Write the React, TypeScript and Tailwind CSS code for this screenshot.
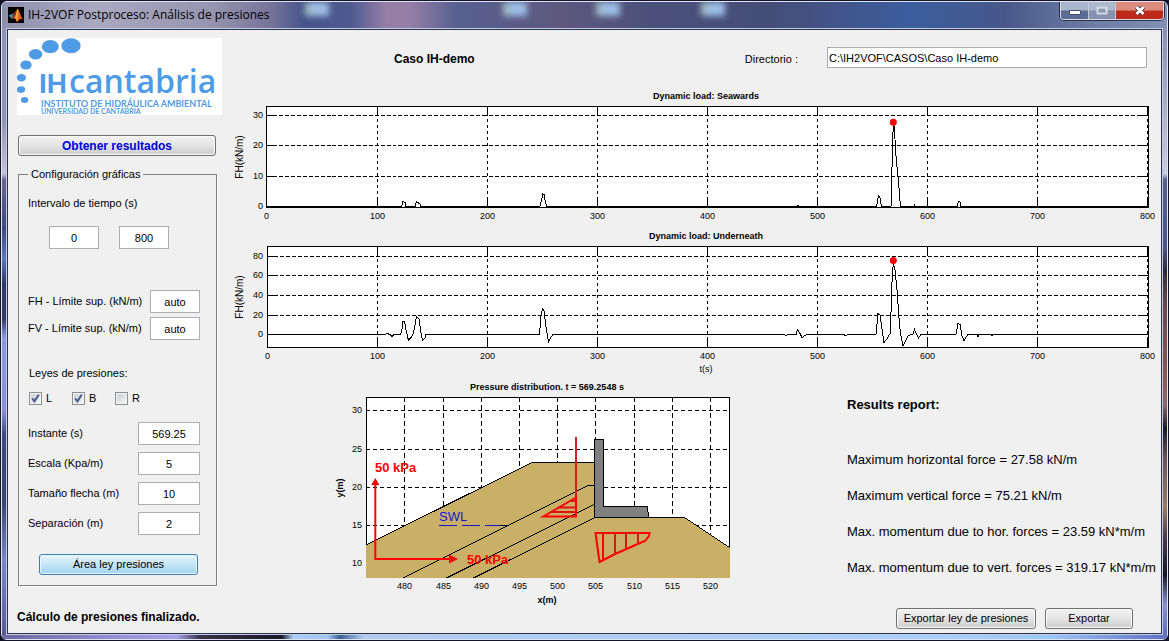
import React, { useId, useState } from 'react';

const BUTTON_BASE =
  'h-[21px] rounded-[3px] border border-[#707070] bg-linear-to-b from-[#f3f3f3] from-0% via-[#e4e4e4] via-50% to-[#cdcdcd] shadow-[inset_0_0_0_1px_#fafafa] flex items-center justify-center whitespace-nowrap';

const INPUT_BASE = 'h-[23px] border border-[#abadb3] bg-white text-center text-[11px] text-black outline-none';

interface FieldProps {
  label: string;
  value: string;
  inputClass: string;
}

const Field: React.FC<FieldProps> = ({ label, value, inputClass }) => {
  const id = useId();
  return (
    <div className="flex items-start justify-between">
      <label htmlFor={id} className="pt-1 leading-[14px]">
        {label}
      </label>
      <input id={id} type="text" defaultValue={value} className={`${INPUT_BASE} ${inputClass}`} />
    </div>
  );
};

interface CheckProps {
  label: string;
  initial: boolean;
}

const Check: React.FC<CheckProps> = ({ label, initial }) => {
  const [checked, setChecked] = useState(initial);
  return (
    <label className="relative flex w-[43px] items-center gap-1">
      <input
        type="checkbox"
        checked={checked}
        onChange={(e) => setChecked(e.target.checked)}
        className="h-[13px] w-[13px] appearance-none border border-[#8e8f8f] bg-linear-to-br from-[#c8ccd2] to-[#f8f8f8] shadow-[inset_0_0_0_1px_#f4f4f4]"
      />
      {checked && (
        <svg className="pointer-events-none absolute left-0 h-[13px] w-[13px]" viewBox="0 0 13 13">
          <path d="M3.2 6.2L5.4 9.4L9.8 2.6" fill="none" stroke="#4b5f97" strokeWidth="2" />
        </svg>
      )}
      {label}
    </label>
  );
};

const Logo = () => (
  <svg viewBox="0 0 205 77" className="block w-[205px] bg-white" role="img" aria-label="IH cantabria">
    <g fill="#4f9be6">
      <ellipse cx="54" cy="7.7" rx="9.7" ry="7.5" />
      <ellipse cx="33.3" cy="8.7" rx="8.5" ry="6.6" />
      <ellipse cx="18.6" cy="16.3" rx="6.7" ry="5.3" />
      <ellipse cx="9" cy="27" rx="5.7" ry="4.6" />
      <ellipse cx="4.4" cy="39.7" rx="4.6" ry="3.8" />
      <ellipse cx="4" cy="51.6" rx="4.2" ry="3.3" />
      <ellipse cx="7.6" cy="62" rx="3.7" ry="2.9" />
      <text x="22" y="55" className="font-['Liberation_Sans',sans-serif] text-[28px] font-bold">
        IH
      </text>
      <text x="52" y="55" className="font-['Open_Sans',sans-serif] text-[32px] font-semibold">
        cantabria
      </text>
      <text x="24" y="69" className="font-['Lato',sans-serif] text-[9px] font-bold">
        INSTITUTO DE HIDRÁULICA AMBIENTAL
      </text>
      <text x="24" y="76" className="font-['Lato',sans-serif] text-[7px] font-bold">
        UNIVERSIDAD DE CANTABRIA
      </text>
    </g>
  </svg>
);

const MatlabIcon = () => (
  <svg viewBox="0 0 16 16" className="h-4 w-4 bg-black">
    <path d="M0.5 8.5L5 6.5L7 8.5L4 12Z" fill="#3f8fb0" />
    <path d="M5 6.5L8 3.5L9.5 1.5L7.5 9L4 12Z" fill="#7a3322" />
    <path d="M9.5 1.5C11.5 3 12.5 9.5 15.5 13L12.5 11.5L9 15L7 11L4 12L7.5 8.5Z" fill="#e8621c" />
    <path d="M9.5 1.5C10.5 4 10.5 8 9 15L7.2 11L8 7Z" fill="#f7a23b" />
  </svg>
);

interface TimeChartProps {
  title: string;
  left: number;
  yTicks: { value: number; y: number }[];
  baseline: number;
  series: string;
  peakY: number;
  xLabel?: string;
}

const X_TICKS = [0, 100, 200, 300, 400, 500, 600, 700, 800];

const TimeChart: React.FC<TimeChartProps> = ({ title, left, yTicks, baseline, series, peakY, xLabel }) => {
  const tickX = (t: number) => 37.5 + t * 1.1;
  const top = 18.5;
  const bottom = 119.5;
  const right = 918;

  return (
    <svg viewBox={xLabel ? '0 0 931 150' : '0 0 931 140'} className="block w-full" role="img" aria-label={title}>
      <rect x={left} y={top} width={right - left} height={bottom - top} fill="white" />
      <g stroke="black" shapeRendering="crispEdges" fill="none">
        {yTicks.map(({ value, y }) => (
          <g key={value}>
            {y !== baseline && <path d={`M${left} ${y}H${right}`} strokeDasharray="4 2" />}
            <path d={`M${left} ${y}h9M${right} ${y}h-10`} />
          </g>
        ))}
        {X_TICKS.slice(1).map((t) => (
          <g key={t}>
            <path d={`M${tickX(t)} ${top}V${bottom}`} strokeDasharray="3 3" />
            <path d={`M${tickX(t)} ${top}v9M${tickX(t)} ${bottom}v-9`} />
          </g>
        ))}
        <rect x={left} y={top} width={right - left} height={bottom - top} />
        <path d={`M${right + 0.5} ${top}V${bottom}`} />
        <polyline points={series} />
      </g>
      <circle cx="663.3" cy={peakY} r="3.5" fill="red" />
      <g className="text-[9px]">
        {X_TICKS.map((t) => (
          <text key={t} x={t === 0 ? left : tickX(t)} y="131" textAnchor="middle">
            {t}
          </text>
        ))}
        {yTicks.map(({ value, y }) => (
          <text key={value} x="33" y={y + 2.5} textAnchor="end">
            {value}
          </text>
        ))}
      </g>
      <text x="476" y="11" textAnchor="middle" className="text-[9px] font-bold">
        {title}
      </text>
      <text transform="translate(13 69) rotate(-90)" textAnchor="middle" className="text-[10px]">
        FH(kN/m)
      </text>
      {xLabel && (
        <text x="476" y="144" textAnchor="middle" className="text-[9px]">
          {xLabel}
        </text>
      )}
    </svg>
  );
};

const SEAWARDS_TICKS = [
  { value: 30, y: 27.5 },
  { value: 20, y: 57.5 },
  { value: 10, y: 88.5 },
  { value: 0, y: 118.5 },
];

const UNDERNEATH_TICKS = [
  { value: 80, y: 28.5 },
  { value: 60, y: 47.5 },
  { value: 40, y: 67.5 },
  { value: 20, y: 87.5 },
  { value: 0, y: 106.5 },
];

const SEAWARDS_SERIES =
  '37,118.5 171.5,118.5 173,113.5 175,114.5 176,118.5 185,118.5 186.5,113.5 190,116 191,118.5 310,118.5 312,110 312.5,105.5 314,106.5 315,112 316.5,118.5 567,118.5 568,117.5 569,118.5 646.5,118.5 648.5,107.5 650,110 651.5,118.5 661,118.5 662.5,60 663.3,35 664.5,40 665.5,62 667.5,84 669,100 670.5,118.5 684,118.5 684.5,117.5 685,118.5 727,118.5 728.5,113.5 730,114 731,118.5 918,118.5';

const UNDERNEATH_SERIES =
  '37,106.5 155,106.5 157,105.5 160,106.5 162,108.5 164,106.5 170.5,106.5 172,101 173,93 174.5,93 176,102 178.5,112.5 181,109.5 183,106.5 184.5,100 186.5,88.5 189,91 191,105 192.5,112.5 195,110 196,106.5 309.5,106.5 311,88 312.5,80.5 314,83 316,99 318.5,114 321,109 323,106.5 554,106.5 556,107.5 558,106.5 566,106.5 567.5,101.5 569.5,104.5 572,109.5 575,107.5 577,106.5 614,106.5 616,108 618,106.5 646,106.5 648,85.5 650,87 652,101 654,114.5 657,111 659,107 660.5,106.5 661.5,62 663.3,35 665,42 667,62 669,90 670.5,106 673,117.5 675,114 678,108 681,106.5 683,106 684.5,101.5 686.5,106 688.5,110 691,106.5 726,106.5 728,95 730,96.5 732,108 734,112.5 736,109 738,106.5 747,106.5 748,108.5 749,106.5 761,106.5 762,107.5 763,106.5 918,106.5';

const SECTION_X = [
  { value: 480, x: 74.5 },
  { value: 485, x: 113.5 },
  { value: 490, x: 151.5 },
  { value: 495, x: 189.5 },
  { value: 500, x: 227.5 },
  { value: 505, x: 265.5 },
  { value: 510, x: 304.5 },
  { value: 515, x: 342.5 },
  { value: 520, x: 380.5 },
];

const SECTION_Y = [
  { value: 30, y: 32.5 },
  { value: 25, y: 71.5 },
  { value: 20, y: 109.5 },
  { value: 15, y: 147.5 },
  { value: 10, y: 185.5 },
];

const PressureChart = () => (
  <svg viewBox="0 0 410 228" className="block w-[410px] shrink-0" role="img" aria-label="Pressure distribution">
    <rect x="36.5" y="19.5" width="363" height="180" fill="white" />
    <g stroke="black" fill="none" shapeRendering="crispEdges">
      {SECTION_X.map(({ value, x }) => (
        <path key={value} d={`M${x} 19V199`} strokeDasharray="5 3" />
      ))}
      {SECTION_Y.map(({ value, y }) => (
        <path key={value} d={`M36 ${y}H399`} strokeDasharray="4 3" />
      ))}
      <path d="M36.5 200V19.5H399.5V200" />
    </g>

    {/* Breakwater core and layers */}
    <path d="M36 167L202 84.5H264.5V139.5H354.5L400 170V200H36Z" fill="#c9b066" />
    <g stroke="black" fill="none" shapeRendering="crispEdges">
      <path d="M36 167L202 84.5H264.5" />
      <path d="M264.5 139.5H354.5L399.5 169.5" />
      <path d="M73 200L258 107.5H264.5" />
      <path d="M116.5 200L265 126" />
      <path d="M143.5 200L265 139.5" />
      <path d="M264.5 61.5H273.5V128.5H317.5L318.5 139.5H264.5Z" fill="#808080" />
    </g>

    {/* Still water level */}
    <path d="M109 147.5H171" stroke="#1414cc" strokeDasharray="18 5" shapeRendering="crispEdges" />
    <path d="M171 147.5H177" stroke="black" shapeRendering="crispEdges" />
    <text x="109" y="143" fill="#1414dc" className="text-[13px]">
      SWL
    </text>

    {/* Scale arrows */}
    <g stroke="red" strokeWidth="2" fill="none">
      <path d="M45.3 105V181H121" />
      <path d="M246 59V119" stroke="#cf1f1f" />
      <path d="M246 118V138.5H213.5L246 119.5" />
      <path d="M239.5 123H246M228 129.5H246M220 134H246" stroke="#e01010" />
      <path d="M265.5 155H319.5L319 158L315 163L306.5 166.5L296.5 171L285 176L272.5 182.5L269.5 184Z" />
      <path d="M273 155V182" />
      <path d="M285 155V176M296 155V171M308 155V166" stroke="#d81818" />
    </g>
    <path d="M45.3 100L49.3 107H41.3ZM128 181L119 176.5V185.5Z" fill="red" />
    <g fill="red" className="text-[13px] font-bold">
      <text x="45" y="94">50 kPa</text>
      <text x="137" y="186">50 kPa</text>
    </g>

    <g className="text-[9px]">
      {SECTION_X.map(({ value, x }) => (
        <text key={value} x={x} y="211" textAnchor="middle">
          {value}
        </text>
      ))}
      {SECTION_Y.map(({ value, y }) => (
        <text key={value} x="32" y={y + 2.5} textAnchor="end">
          {value}
        </text>
      ))}
    </g>
    <g className="text-[9px] font-bold" textAnchor="middle">
      <text x="217" y="12">Pressure distribution. t = 569.2548 s</text>
      <text x="217" y="225">x(m)</text>
      <text transform="translate(13 110) rotate(-90)">y(m)</text>
    </g>
  </svg>
);

const RESULTS = [
  'Maximum horizontal force = 27.58 kN/m',
  'Maximum vertical force = 75.21 kN/m',
  'Max. momentum due to hor. forces = 23.59 kN*m/m',
  'Max. momentum due to vert. forces = 319.17 kN*m/m',
];

const TitleBar = () => (
  <header className="relative flex h-[26px] items-start justify-between overflow-hidden rounded-t-[5px] bg-[linear-gradient(90deg,#8d90ad_0%,#aaa9c0_8%,#9794af_18%,#77749a_23%,#45548a_26%,#505b90_30%,#967fa6_33%,#967fa6_35%,#566090_39%,#5f587f_48%,#4a5079_56%,#454e78_66%,#42548a_72%,#3a5e9d_78%,#47578a_86%,#66779f_92%,#8390b4_100%)]">
    <span className="absolute top-0 left-[26%] h-3.5 w-6 bg-linear-to-r from-[#a3b8b0] to-[#9dc0e6] to-40% blur-[3px]" />
    <span className="absolute top-0 left-[43%] h-3.5 w-6 bg-linear-to-r from-[#a3b8b0] to-[#9dc0e6] to-40% blur-[3px]" />
    <span className="absolute top-0 left-[51%] h-3.5 w-6 bg-linear-to-r from-[#a3b8b0] to-[#9dc0e6] to-40% blur-[3px]" />
    <span className="absolute top-0 left-[60%] h-3.5 w-6 bg-linear-to-r from-[#a3b8b0] to-[#9dc0e6] to-40% blur-[3px]" />
    <div className="flex items-center gap-1 self-center pl-1.5">
      <MatlabIcon />
      <h1 className="font-['Open_Sans',sans-serif] text-[12px] leading-4 text-black">
        IH-2VOF Postproceso: Análisis de presiones
      </h1>
    </div>
    <div className="relative mr-[3px] flex h-[18px] overflow-hidden rounded-b-[4px] border border-t-0 border-[#d5dae6] shadow-[0_0_0_1px_#2a3050]">
      <button
        type="button"
        aria-label="Minimizar"
        className="flex w-[28px] items-end justify-center border-r border-[#c5cbdb] bg-linear-to-b from-[#a9b5cb] from-45% to-[#5b6d94] to-55% pb-1"
      >
        <svg viewBox="0 0 12 5" className="h-[5px] w-3">
          <rect x="0.5" y="0.5" width="11" height="4" rx="0.5" fill="white" stroke="#454d66" />
        </svg>
      </button>
      <button
        type="button"
        aria-label="Maximizar"
        className="flex w-[27px] items-center justify-center border-r border-[#c5cbdb] bg-linear-to-b from-[#aeb8cd] from-45% to-[#8492b0] to-55%"
      >
        <svg viewBox="0 0 12 9" className="h-[9px] w-3">
          <rect x="1.5" y="1.5" width="9" height="6" fill="none" stroke="#d3d9e4" strokeWidth="2" />
          <rect x="3.5" y="3.5" width="5" height="2" fill="none" stroke="#8290ac" />
        </svg>
      </button>
      <button
        type="button"
        aria-label="Cerrar"
        className="flex w-[47px] items-center justify-center bg-linear-to-b from-[#dc8b7d] from-45% to-[#bb2a1a] to-55%"
      >
        <svg viewBox="0 0 12 11" className="h-[11px] w-3">
          <path d="M2.5 2L9.5 9M9.5 2L2.5 9" stroke="#4a3a44" strokeWidth="4.5" />
          <path d="M2.5 2L9.5 9M9.5 2L2.5 9" stroke="white" strokeWidth="2.8" />
        </svg>
      </button>
    </div>
  </header>
);

const SettingsPanel = () => (
  <aside className="w-[222px] shrink-0 pt-2 pl-[9px]">
    <Logo />
    <button type="button" className={`${BUTTON_BASE} mt-5 ml-px w-[198px] text-[12px] font-bold text-[#0000e0]`}>
      Obtener resultados
    </button>
    <fieldset className="mt-[11px] ml-px w-[199px] border border-[#808080] pr-4 pb-[10px] pl-[9px] shadow-[1px_1px_0_white]">
      <legend className="px-[3px] leading-[14px]">Configuración gráficas</legend>
      <div className="pt-[15px] leading-[14px]">Intervalo de tiempo (s)</div>
      <div className="flex gap-5 pt-4 pl-[21px]">
        <input type="text" aria-label="Tiempo inicial" defaultValue="0" className={`${INPUT_BASE} w-[50px]`} />
        <input type="text" aria-label="Tiempo final" defaultValue="800" className={`${INPUT_BASE} w-[50px]`} />
      </div>
      <div className="flex flex-col gap-1 pt-[41px]">
        <Field label="FH - Límite sup. (kN/m)" value="auto" inputClass="w-[50px]" />
        <Field label="FV - Límite sup. (kN/m)" value="auto" inputClass="w-[50px]" />
      </div>
      <div className="pt-[26px] pl-px leading-[14px]">Leyes de presiones:</div>
      <div className="flex pt-3 pl-px leading-[13px]">
        <Check label="L" initial={true} />
        <Check label="B" initial={true} />
        <Check label="R" initial={false} />
      </div>
      <div className="flex flex-col gap-[7px] pt-[17px]">
        <Field label="Instante (s)" value="569.25" inputClass="w-[62px]" />
        <Field label="Escala (Kpa/m)" value="5" inputClass="w-[62px]" />
        <Field label="Tamaño flecha (m)" value="10" inputClass="w-[62px]" />
        <Field label="Separación (m)" value="2" inputClass="w-[62px]" />
      </div>
      <button
        type="button"
        className="mt-[19px] ml-[11px] flex h-[21px] w-[159px] items-center justify-center rounded-[3px] border border-[#3c7fb1] bg-linear-to-b from-[#e8f5fc] via-[#c4e5f6] to-[#a0d5f1] shadow-[inset_0_0_0_1px_#e6f6fd]"
      >
        Área ley presiones
      </button>
    </fieldset>
  </aside>
);

const App = () => (
  <div className="flex min-h-screen flex-col bg-[#15152a] p-px font-['Liberation_Sans',Arial,sans-serif] text-[11px] text-black">
    <div className="flex flex-1 flex-col rounded-[6px] border border-[#dfe3f2] bg-[#7f8ac0]">
      <TitleBar />
      <div className="flex flex-1">
        <div className="w-1 bg-[linear-gradient(180deg,#8f93b5_0%,#8f93b5_15%,#c6c0d8_24%,#6a6590_25%,#3f4a80_33%,#5a78b8_38%,#303a68_42%,#343a68_48%,#8a9ae0_51%,#8b90d4_63%,#3f4a80_67%,#3a4570_78%,#7a88c8_88%,#5a5a98_100%)]" />
        <div className="flex flex-1 flex-col border border-[#c3cbe0]">
          <div className="flex flex-1 flex-col justify-between border border-[#2c3350] bg-[#f0f0f0]">
            <div className="flex">
              <SettingsPanel />
              <main className="min-w-0 flex-1">
                <div className="flex h-[58px] items-start pt-[17px] pr-[14px] pl-[164px]">
                  <h2 className="text-[12px] leading-6 font-bold">Caso IH-demo</h2>
                  <label htmlFor="directorio" className="mr-[29px] ml-auto leading-6">
                    Directorio :
                  </label>
                  <input
                    id="directorio"
                    type="text"
                    defaultValue="C:\IH2VOF\CASOS\Caso IH-demo"
                    className="h-[21px] w-[320px] border border-[#abadb3] bg-white pl-px text-[11px] outline-none"
                  />
                </div>
                <TimeChart
                  title="Dynamic load: Seawards"
                  left={36.5}
                  yTicks={SEAWARDS_TICKS}
                  baseline={118.5}
                  series={SEAWARDS_SERIES}
                  peakY={34.3}
                />
                <TimeChart
                  title="Dynamic load: Underneath"
                  left={37.5}
                  yTicks={UNDERNEATH_TICKS}
                  baseline={106.5}
                  series={UNDERNEATH_SERIES}
                  peakY={32.5}
                  xLabel="t(s)"
                />
                <div className="flex items-start pl-[100px]">
                  <PressureChart />
                  <section className="ml-[107px] pt-[17px] text-[13px] leading-5 whitespace-nowrap">
                    <h3 className="mb-[35px] font-bold">Results report:</h3>
                    <ul className="flex flex-col gap-4">
                      {RESULTS.map((line) => (
                        <li key={line}>{line}</li>
                      ))}
                    </ul>
                  </section>
                </div>
              </main>
            </div>
            <footer className="flex h-[27px] items-start justify-between pt-0.5 pr-7 pl-[9px]">
              <p className="text-[12px] leading-[18px] font-bold">Cálculo de presiones finalizado.</p>
              <div className="flex gap-[9px]">
                <button type="button" className={`${BUTTON_BASE} w-[140px]`}>
                  Exportar ley de presiones
                </button>
                <button type="button" className={`${BUTTON_BASE} w-[88px]`}>
                  Exportar
                </button>
              </div>
            </footer>
          </div>
        </div>
        <div className="w-1 bg-[linear-gradient(180deg,#8a8fb0_0%,#c8cce0_24%,#55608f_25%,#4a5588_36%,#2f2a38_40%,#6a4a4a_46%,#8a5a50_58%,#8b6a68_62%,#1a1a24_66%,#6a5458_71%,#9a7a60_79%,#4a3a4a_84%,#15151f_90%,#8a90d0_95%,#6070c0_100%)]" />
      </div>
      <div className="h-1 rounded-b-[4px] bg-[linear-gradient(90deg,#6a6aa0_0%,#9a95d8_11%,#a8a0e8_15%,#3a3048_17%,#1a1828_24%,#a8d0f8_25%,#9cc4f0_28%,#3a6090_29%,#b0ccf0_31%,#a8d0ff_80%,#9cc8f8_90%,#6070c0_100%)]" />
    </div>
  </div>
);

export default App;
